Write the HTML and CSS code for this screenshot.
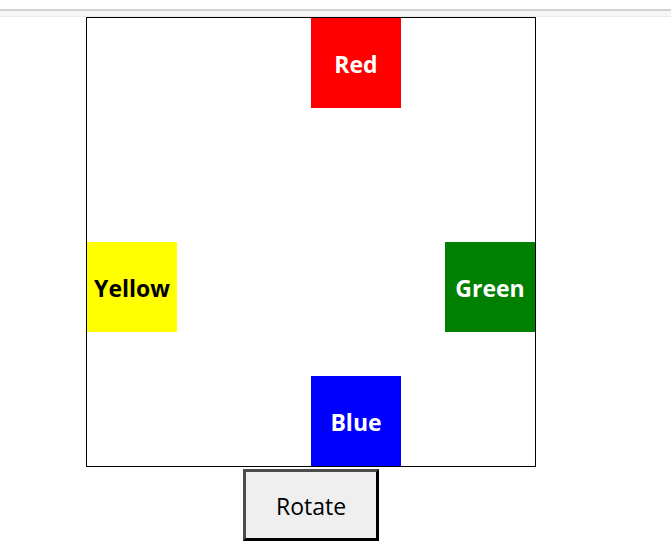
FILE: index.html
```html
<!DOCTYPE html>
<html lang="en">
<head>
<meta charset="utf-8">
<title>Rotate</title>
<link rel="stylesheet" href="styles.css">
</head>
<body>
<div class="top-strip"></div>
<main class="page">
  <div class="board">
    <div class="tile red">Red</div>
    <div class="tile yellow">Yellow</div>
    <div class="tile green">Green</div>
    <div class="tile blue">Blue</div>
  </div>
  <button class="rotate" type="button">Rotate</button>
</main>
</body>
</html>
```

FILE: styles.css
```css
* {
  box-sizing: border-box;
}

body {
  margin: 0;
  background: #fff;
  font-family: "Segoe UI", "Open Sans", "Noto Sans", sans-serif;
  font-size: 23px;
}

.top-strip {
  height: 8px;
  margin-top: 9px;
  border-top: 2px solid #d3d3d3;
  border-bottom: 1px solid #e9e9e9;
  background: #f6f6f6;
}

.page {
  display: flex;
  flex-direction: column;
  align-items: center;
  gap: 2px;
  padding-right: 49px;
}

.board {
  display: grid;
  grid-template-columns: 90px 134px 90px 44px 90px;
  grid-template-rows: 90px 134px 90px 44px 90px;
  border: 1px solid #000;
}

.tile {
  display: flex;
  align-items: center;
  justify-content: center;
  padding-top: 2px;
  color: #fff;
  font-weight: 700;
}

.red {
  grid-area: 1 / 3;
  background: #f00;
}

.yellow {
  grid-area: 3 / 1;
  background: #ff0;
  color: #000;
}

.green {
  grid-area: 3 / 5;
  background: #008000;
}

.blue {
  grid-area: 5 / 3;
  background: #00f;
}

.rotate {
  padding: 18px 30px 16px;
  border: 3px solid;
  border-color: #4c4c4c #000 #000 #4c4c4c;
  background: #efefef;
  color: #000;
  font: inherit;
  line-height: 32px;
}
```
